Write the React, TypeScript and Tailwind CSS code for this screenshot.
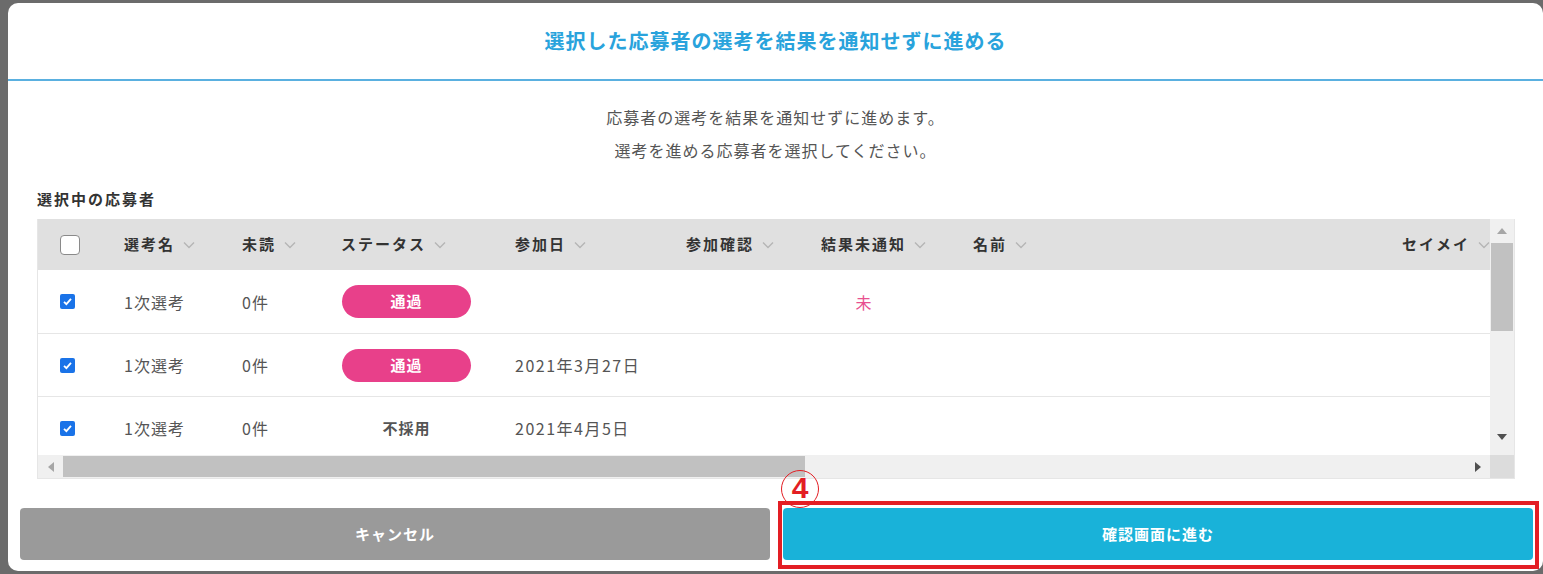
const font = "font-['Noto_Sans_CJK_JP','Noto_Sans',sans-serif]";

const cols = 'grid grid-cols-[86px_118px_99px_174px_171px_135px_152px_429px_140px]';

function Chevron() {
  return (
    <svg width="12" height="8" viewBox="0 0 12 8" className="ml-[8px] shrink-0">
      <polyline points="1,1.5 6,6.5 11,1.5" fill="none" stroke="#b5b5b5" strokeWidth="1.4" />
    </svg>
  );
}

function HeaderCell({ label }: { label: string }) {
  return (
    <div className="flex items-center text-[15px] font-bold tracking-[2px] text-[#333] whitespace-nowrap">
      {label}
      <Chevron />
    </div>
  );
}

function Checked() {
  return (
    <div className="w-[15px] h-[15px] rounded-[2px] bg-[#1a73e8] flex items-center justify-center">
      <svg width="11" height="11" viewBox="0 0 12 12">
        <polyline points="2.2,6.3 4.8,8.9 9.8,3.2" fill="none" stroke="white" strokeWidth="2" />
      </svg>
    </div>
  );
}

function Badge({ label }: { label: string }) {
  return (
    <div className="w-[129px] h-[33px] rounded-full bg-[#e8408a] flex items-center justify-center text-white font-bold text-[15px] tracking-[1px]">
      {label}
    </div>
  );
}

type Row = { status: 'pass' | 'reject'; date: string; unnotified: boolean; h: string };

const rows: Row[] = [
  { status: 'pass', date: '', unnotified: true, h: 'h-[64px]' },
  { status: 'pass', date: '2021年3月27日', unnotified: false, h: 'h-[63px]' },
  { status: 'reject', date: '2021年4月5日', unnotified: false, h: 'h-[63px]' },
];

export default function App() {
  return (
    <div className={`w-[1543px] h-[574px] bg-[#6b6b6b] pt-[3px] pl-[8px] overflow-hidden ${font}`}>
      <div className="w-[1535px] h-[568px] bg-white rounded-[10px] flex flex-col">
        {/* header */}
        <div className="h-[78px] shrink-0 border-b-2 border-[#5ab0e0] flex items-center justify-center">
          <h1 className="text-[20px] leading-[28px] font-bold tracking-[1px] text-[#29a3dc]">
            選択した応募者の選考を結果を通知せずに進める
          </h1>
        </div>

        <div className="pt-[20px] text-center text-[16px] leading-[33px] tracking-[1px] text-[#555]">
          <p>応募者の選考を結果を通知せずに進めます。</p>
          <p>選考を進める応募者を選択してください。</p>
        </div>

        <div className="px-[29px]">
          <p className="mt-[21px] text-[15px] leading-[22px] font-bold tracking-[2px] text-[#333]">選択中の応募者</p>

          {/* table */}
          <div className="mt-[9px] w-[1478px] border border-[#e6e6e6] border-t-0 flex flex-col">
            <div className="flex">
              <div className="w-[1452px] h-[236px] overflow-hidden">
                <div className={`${cols} h-[51px] bg-[#e0e0e0] items-center`}>
                  <div className="pl-[22px]">
                    <div className="w-[20px] h-[20px] rounded-[4px] border-[1.5px] border-[#8a8a8a] bg-white" />
                  </div>
                  <HeaderCell label="選考名" />
                  <HeaderCell label="未読" />
                  <HeaderCell label="ステータス" />
                  <HeaderCell label="参加日" />
                  <HeaderCell label="参加確認" />
                  <HeaderCell label="結果未通知" />
                  <HeaderCell label="名前" />
                  <HeaderCell label="セイメイ" />
                </div>
                {rows.map((r, i) => (
                  <div
                    key={i}
                    className={`${cols} ${r.h} items-center border-b border-[#e6e6e6] text-[16px] tracking-[1px] text-[#555] whitespace-nowrap`}
                  >
                    <div className="pl-[22px]">
                      <Checked />
                    </div>
                    <div>1次選考</div>
                    <div>0件</div>
                    <div className="pl-[1px] tracking-normal">
                      {r.status === 'pass' ? (
                        <Badge label="通過" />
                      ) : (
                        <div className="w-[129px] text-center font-bold text-[15px] tracking-[1px]">不採用</div>
                      )}
                    </div>
                    <div className="tracking-[1.5px]">{r.date}</div>
                    <div />
                    <div className="w-[86px] text-center text-[#e8508f]">{r.unnotified ? '未' : ''}</div>
                    <div />
                    <div />
                  </div>
                ))}
              </div>

              {/* vertical scrollbar */}
              <div className="w-[24px] h-[236px] bg-[#f0f0f0] flex flex-col">
                <div className="h-[24px] flex items-center justify-center">
                  <svg width="10" height="6" viewBox="0 0 10 6">
                    <polygon points="0,6 5,0 10,6" fill="#a6a6a6" />
                  </svg>
                </div>
                <div className="h-[88px] mx-[1px] bg-[#c1c1c1]" />
                <div className="flex-1" />
                <div className="h-[28px] flex items-start justify-center pt-[7px]">
                  <svg width="10" height="6" viewBox="0 0 10 6">
                    <polygon points="0,0 10,0 5,6" fill="#505050" />
                  </svg>
                </div>
              </div>
            </div>

            {/* horizontal scrollbar */}
            <div className="flex h-[23px]">
              <div className="flex-1 bg-[#f0f0f0] flex items-center">
                <div className="w-[25px] flex items-center justify-center">
                  <svg width="6" height="10" viewBox="0 0 6 10">
                    <polygon points="6,0 6,10 0,5" fill="#a6a6a6" />
                  </svg>
                </div>
                <div className="w-[742px] h-[21px] bg-[#c1c1c1]" />
                <div className="flex-1" />
                <div className="w-[24px] flex items-center justify-center">
                  <svg width="6" height="10" viewBox="0 0 6 10">
                    <polygon points="0,0 6,5 0,10" fill="#505050" />
                  </svg>
                </div>
              </div>
              <div className="w-[24px] bg-[#dcdcdc]" />
            </div>
          </div>
        </div>

        {/* buttons */}
        <div className="mt-[29px] pl-[12px] pr-[10px] flex gap-[13px]">
          <button className="flex-1 h-[52px] rounded-[4px] bg-[#9a9a9a] text-white font-bold text-[15px] tracking-[1px]">
            キャンセル
          </button>
          <div className="flex-1 relative">
            <button className="w-full h-[52px] rounded-[4px] bg-[#19b2d9] text-white font-bold text-[15px] tracking-[1px]">
              確認画面に進む
            </button>
            <div className="absolute -left-[5px] -right-[6px] -top-[7px] -bottom-[9px] border-4 border-[#e31e24] pointer-events-none" />
            <div className="absolute left-[-2px] top-[-38px] w-[38px] h-[38px] rounded-full border border-[#e31e24] flex items-start justify-center font-['Liberation_Sans',sans-serif] font-bold text-[30px] leading-[34px] text-[#e31e24]">
              4
            </div>
          </div>
        </div>
      </div>
    </div>
  );
}
